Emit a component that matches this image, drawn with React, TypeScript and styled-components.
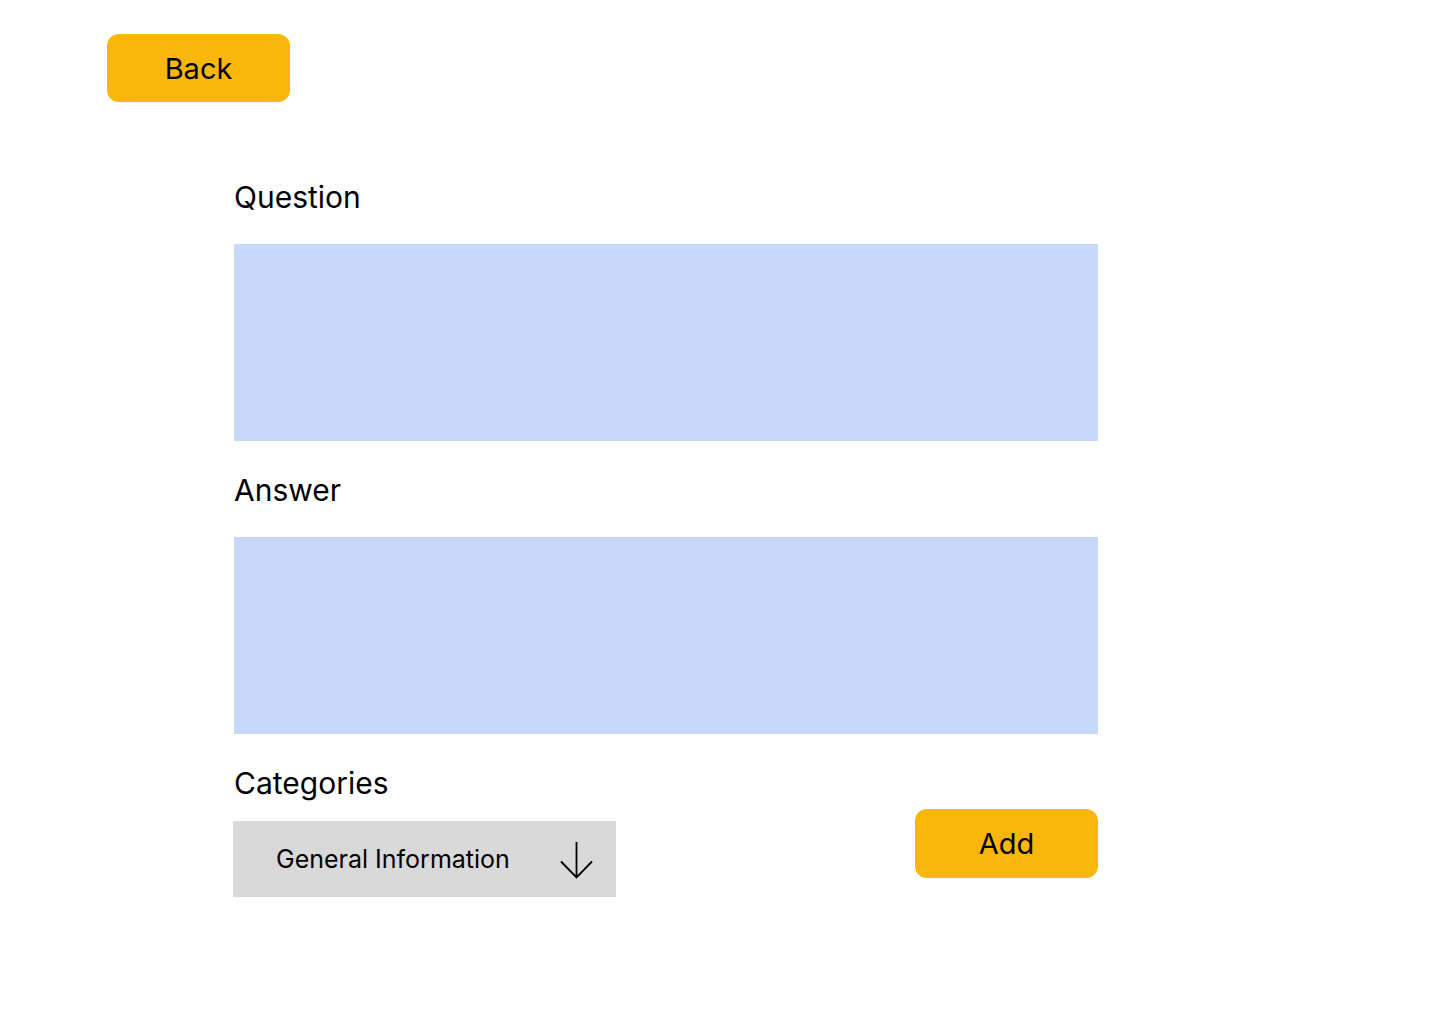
import React from "react";
import styled, { createGlobalStyle } from "styled-components";

const GlobalStyle = createGlobalStyle`
  html, body {
    margin: 0;
    padding: 0;
    background: #ffffff;
    font-family: Inter, "Noto Sans", sans-serif;
    color: #000000;
  }
`;

const Page = styled.div`
  width: 1440px;
  min-height: 1024px;
  box-sizing: border-box;
  padding: 34px 0 0 107px;
  display: flex;
  flex-direction: column;
`;

const YellowButton = styled.button`
  width: 183px;
  height: 68px;
  border: none;
  border-radius: 12px;
  background: #f9b70b;
  color: #000000;
  font-family: Inter, "Noto Sans", sans-serif;
  font-size: 29px;
  line-height: 35px;
  font-weight: 400;
  padding: 0;
  display: flex;
  align-items: center;
  justify-content: center;
  cursor: pointer;
`;

const Form = styled.div`
  width: 864px;
  margin-left: 127px;
  margin-top: 78px;
  display: flex;
  flex-direction: column;
`;

const Label = styled.div<{ $first?: boolean }>`
  font-size: 30px;
  line-height: 34px;
  height: 34px;
  margin-top: ${(p) => (p.$first ? "0" : "32px")};
`;

const TextBox = styled.textarea`
  display: block;
  width: 864px;
  height: 197px;
  margin-top: 30px;
  box-sizing: border-box;
  border: none;
  background: #c7d9fb;
  resize: none;
  outline: none;
  font-family: Inter, "Noto Sans", sans-serif;
  font-size: 20px;
  padding: 12px;
`;

const BottomRow = styled.div`
  display: flex;
  justify-content: space-between;
  align-items: flex-end;
`;

const CategoryColumn = styled.div`
  display: flex;
  flex-direction: column;
  margin-left: -1px;
`;

const CategoryLabel = styled(Label)`
  margin-left: 1px;
`;

const Select = styled.div`
  width: 383px;
  height: 76px;
  margin-top: 21px;
  box-sizing: border-box;
  background: #d9d9d9;
  display: flex;
  align-items: center;
  justify-content: space-between;
  padding: 0 23px 0 43px;
  font-size: 25px;
  cursor: pointer;
`;

const SelectText = styled.span`
  line-height: 30px;
`;

const ArrowIcon = styled.svg`
  width: 33px;
  height: 38px;
  display: block;
  margin-top: 1px;
`;

const AddButton = styled(YellowButton)`
  height: 69px;
  margin-bottom: 19px;
`;

export default function App() {
  return (
    <>
      <GlobalStyle />
      <Page>
        <YellowButton>Back</YellowButton>
        <Form>
          <Label $first>Question</Label>
          <TextBox aria-label="Question" />
          <Label>Answer</Label>
          <TextBox aria-label="Answer" />
          <BottomRow>
            <CategoryColumn>
              <CategoryLabel>Categories</CategoryLabel>
              <Select>
                <SelectText>General Information</SelectText>
                <ArrowIcon viewBox="0 0 33 38" fill="none">
                  <path
                    d="M16.5 1 V36.5 M1 20.5 L16.5 36.5 L32 20.5"
                    stroke="#000"
                    strokeWidth="1.8"
                  />
                </ArrowIcon>
              </Select>
            </CategoryColumn>
            <AddButton>Add</AddButton>
          </BottomRow>
        </Form>
      </Page>
    </>
  );
}
